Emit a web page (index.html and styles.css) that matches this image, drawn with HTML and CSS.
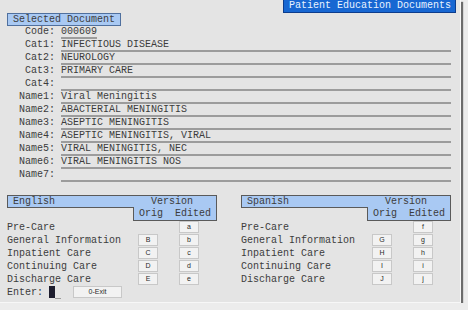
FILE: index.html
```
<!DOCTYPE html>
<html lang="en">
<head>
    <meta charset="UTF-8">
    <meta name="viewport" content="width=device-width, initial-scale=1.0">
    <title>Patient Education Documents</title>
    <link rel="stylesheet" href="styles.css">
</head>
<body>
    <div class="screen">
        <div class="title-bar">
            <span class="title">Patient Education Documents</span>
        </div>

        <div class="legend">Selected Document</div>

        <div class="fields">
            <div class="field"><span class="label">Code:</span><span class="value short">000609</span></div>
            <div class="field"><span class="label">Cat1:</span><span class="value">INFECTIOUS DISEASE</span></div>
            <div class="field"><span class="label">Cat2:</span><span class="value">NEUROLOGY</span></div>
            <div class="field"><span class="label">Cat3:</span><span class="value">PRIMARY CARE</span></div>
            <div class="field"><span class="label">Cat4:</span><span class="value"></span></div>
            <div class="field"><span class="label">Name1:</span><span class="value">Viral Meningitis</span></div>
            <div class="field"><span class="label">Name2:</span><span class="value">ABACTERIAL MENINGITIS</span></div>
            <div class="field"><span class="label">Name3:</span><span class="value">ASEPTIC MENINGITIS</span></div>
            <div class="field"><span class="label">Name4:</span><span class="value">ASEPTIC MENINGITIS, VIRAL</span></div>
            <div class="field"><span class="label">Name5:</span><span class="value">VIRAL MENINGITIS, NEC</span></div>
            <div class="field"><span class="label">Name6:</span><span class="value">VIRAL MENINGITIS NOS</span></div>
            <div class="field"><span class="label">Name7:</span><span class="value"></span></div>
        </div>

        <div class="versions">
            <div class="lang">
                <div class="lang-head">
                    <div class="head-top"><span class="head-name">English</span><span>Version</span></div>
                    <div class="head-sub">
                        <div class="head-gap"></div>
                        <div class="head-cols"><span class="col-orig">Orig</span><span>Edited</span></div>
                    </div>
                </div>
                <div class="doc-row"><span class="doc-name">Pre-Care</span><span class="slot"></span><button class="key">a</button></div>
                <div class="doc-row"><span class="doc-name">General Information</span><button class="key">B</button><button class="key">b</button></div>
                <div class="doc-row"><span class="doc-name">Inpatient Care</span><button class="key">C</button><button class="key">c</button></div>
                <div class="doc-row"><span class="doc-name">Continuing Care</span><button class="key">D</button><button class="key">d</button></div>
                <div class="doc-row"><span class="doc-name">Discharge Care</span><button class="key">E</button><button class="key">e</button></div>
                <div class="enter-row">
                    <span>Enter:</span><span class="cursor"></span><span class="blank"></span>
                    <button class="exit">0-Exit</button>
                </div>
            </div>

            <div class="lang">
                <div class="lang-head">
                    <div class="head-top"><span class="head-name">Spanish</span><span>Version</span></div>
                    <div class="head-sub">
                        <div class="head-gap"></div>
                        <div class="head-cols"><span class="col-orig">Orig</span><span>Edited</span></div>
                    </div>
                </div>
                <div class="doc-row"><span class="doc-name">Pre-Care</span><span class="slot"></span><button class="key">f</button></div>
                <div class="doc-row"><span class="doc-name">General Information</span><button class="key">G</button><button class="key">g</button></div>
                <div class="doc-row"><span class="doc-name">Inpatient Care</span><button class="key">H</button><button class="key">h</button></div>
                <div class="doc-row"><span class="doc-name">Continuing Care</span><button class="key">I</button><button class="key">i</button></div>
                <div class="doc-row"><span class="doc-name">Discharge Care</span><button class="key">J</button><button class="key">j</button></div>
            </div>
        </div>
    </div>
</body>
</html>
```

FILE: styles.css
```
body {
    margin: 0;
    background: #ececec;
    font-family: "Liberation Mono", "DejaVu Sans Mono", monospace;
    font-size: 10px;
    color: #3c3c3c;
}

.screen {
    box-sizing: border-box;
    width: 461px;
    height: 303px;
    padding-left: 7px;
    background: #e4e4e4;
    border-right: 1px solid #f7f7f7;
    border-bottom: 1px solid #f7f7f7;
    box-shadow: 2px 2px 1px #6c6c6c;
}

/* header */
.title-bar {
    display: flex;
    justify-content: flex-end;
    padding-right: 4px;
    height: 13px;
}

.title {
    box-sizing: border-box;
    width: 173px;
    height: 13px;
    padding-left: 5px;
    line-height: 12px;
    background: #1767d2;
    color: #e8f3ff;
    border: 1px solid #0c3c8c;
    border-top: none;
}

.legend {
    box-sizing: border-box;
    width: 114px;
    height: 13px;
    padding-left: 5px;
    line-height: 11px;
    background: #a9c9f3;
    border: 1px solid #50709e;
}

/* document fields */
.fields {
    margin-bottom: 13px;
}

.field {
    display: flex;
    height: 13px;
}

.label {
    width: 48px;
    margin-right: 6px;
    text-align: right;
    line-height: 11px;
}

.value {
    width: 390px;
    height: 11px;
    line-height: 11px;
    border-bottom: 2px solid #9c9c9c;
}

.value.short {
    width: auto;
}

/* version tables */
.versions {
    display: flex;
    gap: 24px;
}

.lang {
    width: 210px;
}

.head-top {
    box-sizing: border-box;
    display: flex;
    height: 12px;
    padding-left: 5px;
    line-height: 11px;
    background: #a9c9f3;
    border: 1px solid #5a5a5a;
    border-bottom: none;
}

.head-name {
    width: 138px;
}

.head-sub {
    display: flex;
    height: 14px;
}

.head-gap {
    width: 126px;
    border-top: 1px solid #5a5a5a;
}

.head-cols {
    box-sizing: border-box;
    display: flex;
    width: 84px;
    height: 14px;
    padding-left: 5px;
    line-height: 13px;
    background: #a9c9f3;
    border: 1px solid #5a5a5a;
    border-top: none;
}

.col-orig {
    width: 36px;
}

.doc-row {
    display: flex;
    height: 13px;
    line-height: 13px;
}

.doc-name {
    width: 131px;
}

.slot {
    width: 20px;
}

.key,
.exit {
    box-sizing: border-box;
    height: 12px;
    padding: 0;
    background: #f2f2f2;
    border: 1px solid #c8c8c8;
    font-family: "Liberation Sans", Arial, sans-serif;
    font-size: 7px;
    line-height: 10px;
    color: #2a2a2a;
}

.key {
    width: 20px;
}

.key + .key,
.slot + .key {
    margin-left: 21px;
}

.enter-row {
    display: flex;
    height: 13px;
    line-height: 13px;
}

.cursor {
    width: 6px;
    height: 12px;
    margin-left: 6px;
    background: #1d1d2e;
}

.blank {
    width: 6px;
    height: 12px;
    border-bottom: 1px solid #9c9c9c;
}

.exit {
    width: 49px;
    margin-left: 12px;
}
```
